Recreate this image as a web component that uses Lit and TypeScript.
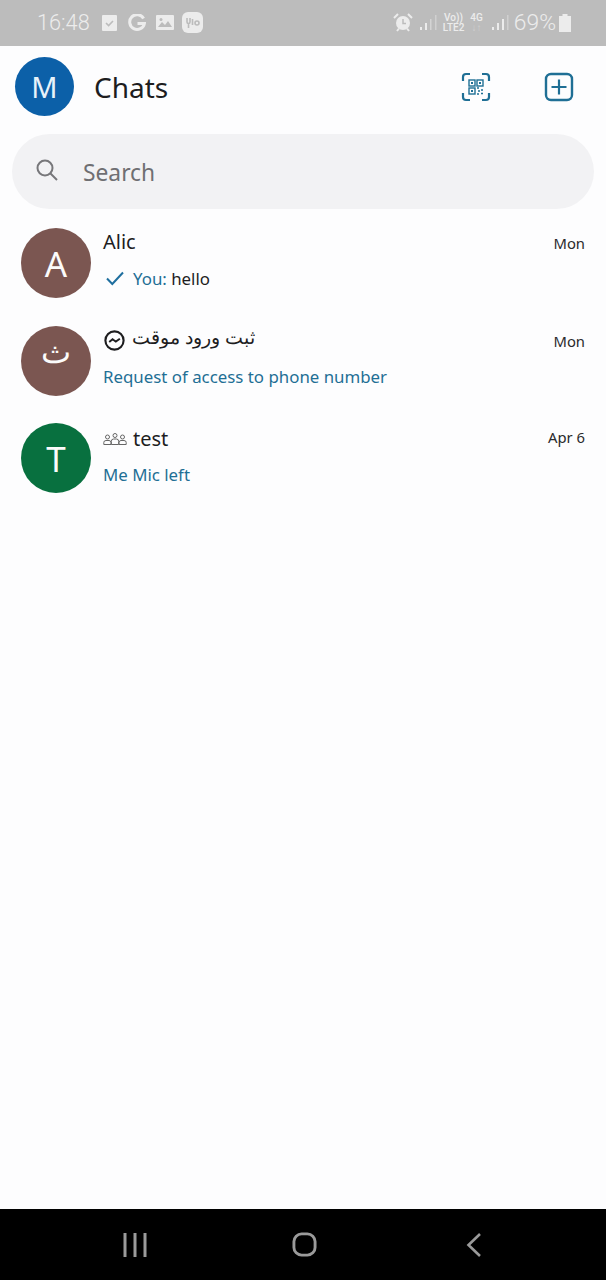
import { LitElement, html, css, svg } from "lit";
import { customElement } from "lit/decorators.js";

const check = svg`<svg class="check" width="22" height="18" viewBox="0 0 22 18"><path d="M3 9.5 8.300 15 19 3.500" fill="none" stroke="#1f6f9f" stroke-width="2"/></svg>`;
const messenger = svg`<svg class="ti" width="23" height="23" viewBox="0 0 24 24"><circle cx="12" cy="12" r="9.500" fill="none" stroke="#1d1d1f" stroke-width="2.200"/><path d="M6.500 13.600 10 10.600l3.400 2.600 4.200-3" fill="none" stroke="#1d1d1f" stroke-width="2"/></svg>`;
const group = svg`<svg class="ti" width="24" height="14" viewBox="0 0 24 14" fill="none" stroke="#666" stroke-width="1"><circle cx="4.500" cy="5" r="2"/><circle cx="12" cy="3.500" r="2"/><circle cx="19.500" cy="5" r="2"/><path d="M.8 12.500V10.500Q.8 8.500 3 8.500H6Q8 8.500 8 10.500V12.500ZM8.300 12.500V9.500Q8.300 7 10.500 7H13.500Q15.700 7 15.700 9.500V12.500ZM16 12.500V10.500Q16 8.500 18 8.500H21Q23.200 8.500 23.200 10.500V12.500Z"/></svg>`;

@customElement("app-root")
export class AppRoot extends LitElement {
  static styles = css`
    :host { display: flex; flex-direction: column; width: 606px; height: 1280px; background: #fdfdfe; font-family: "Noto Sans", "Noto Sans CJK SC", sans-serif; color: #1d1d1f; overflow: hidden; }
    .status { height: 45px; background: #bcbcbc; display: flex; align-items: center; justify-content: space-between; padding: 0 35px 1px 37px; color: #ececec; flex: none; }
    .sl, .sr { display: flex; align-items: center; }
    .time { font-size: 21.700px; margin-right: 12px; font-family: "Roboto", sans-serif; font-weight: 300; }
    .sl svg { margin-right: 10px; }
    .sl svg:first-of-type { margin-right: 11px; }
    .sl svg:nth-of-type(3) { margin-right: 8px; }
    .pct { font-size: 22.800px; font-family: "Roboto", sans-serif; font-weight: 300; margin: 0 3px 0 3px; }
    .net { font-family: "Roboto", sans-serif; font-size: 10px; line-height: 10px; text-align: center; font-weight: 500; margin: 0 4px; }
    .sig1 { margin-left: 6px; }
    .sig2 { margin-left: 4px; }
    .net2 { margin-left: 2px; }
    .dim { color: #d0d0d0; }
    header { display: flex; align-items: center; height: 84px; padding: 0 32px 3px 15px; flex: none; box-sizing: border-box; }
    .me { width: 59px; height: 59px; background: #0c60a8; color: #e8f2fa; font-size: 29px; margin-right: 20px; }
    .avatar { border-radius: 50%; display: flex; align-items: center; justify-content: center; flex: none; }
    h1 { margin: 0; font-size: 28px; font-weight: 400; flex: 1; line-height: 1; }
    .qr { margin-right: 53px; }
    .search { margin: 4px 12px 0; height: 75px; border-radius: 38px; background: #f2f2f4; display: flex; align-items: center; padding: 0 24px; color: #6f6f72; font-size: 22.800px; flex: none; }
    .search svg { margin-right: 25px; margin-top: -4px; }
    .search span { margin-top: 2px; }
    .list { display: flex; flex-direction: column; padding: 19px 21px 0; gap: 27px; flex: 1; }
    .row { display: flex; height: 70.500px; }
    .row .avatar { width: 70px; height: 70px; color: #fbfbfb; font-size: 35px; margin-right: 12px; }
    .row .arabic { padding-bottom: 20px; box-sizing: border-box; font-size: 32px; }
    .body { flex: 1; display: flex; flex-direction: column; }
    .first .body { margin-top: -1px; }
    .top { display: flex; justify-content: space-between; height: 30px; align-items: center; }
    .name { font-size: 20px; display: flex; align-items: center; gap: 6px; line-height: 30px; }
    .fa { font-size: 19.400px; margin-top: -8px; }
    .third .name { margin-top: 2px; }
    .date { font-size: 14.800px; margin-top: 1px; color: #2a2a2c; }
    .third .date { margin-top: -3px; }
    .sub { font-size: 16.850px; color: #1f6f95; display: flex; align-items: center; height: 30px; margin-top: 6px; }
    .sub .dark { color: #1d1d1f; white-space: pre; }
    .check { margin-right: 7px; margin-left: 1px; }
    .ti { flex: none; }
    nav { height: 71px; background: #000; display: flex; align-items: center; justify-content: center; flex: none; }
    nav svg { flex: none; }
    .home { margin-right: 5px; }
    .nav-row { display: flex; width: 359px; justify-content: space-between; align-items: center; margin-right: 1px; }
  `;

  render() {
    return html`
      <div class="status">
        <div class="sl">
          <span class="time">16:48</span>
          <svg width="15" height="16" viewBox="0 0 15 16"><path d="M1 0h13a1 1 0 0 1 1 1v14a1 1 0 0 1-1 1H1a1 1 0 0 1-1-1V1a1 1 0 0 1 1-1Z" fill="#ececec"/><path d="M4 8l2.600 2.600L11 6" fill="none" stroke="#bcbcbc" stroke-width="1.600"/></svg>
          <svg width="18" height="18" viewBox="0 0 18 18"><path d="M15.600 4.500A7.400 7.400 0 1 0 16.400 9.400H9.500" fill="none" stroke="#ececec" stroke-width="3"/></svg>
          <svg width="18" height="15" viewBox="0 0 18 15"><rect width="18" height="15" rx="1" fill="#ececec"/><path d="M2 12l4-5 3 3 3-4 4 6Z" fill="#bcbcbc"/><circle cx="5" cy="4.500" r="1.500" fill="#bcbcbc"/></svg>
          <svg width="21" height="21" viewBox="0 0 21 21"><rect width="21" height="21" rx="6" fill="#ececec"/><path d="M5 6v4q0 1.500 1.500 1.500T8 10V6M6.500 11v5M10.500 7v6" fill="none" stroke="#bcbcbc" stroke-width="1.600"/><circle cx="15" cy="11" r="2" fill="none" stroke="#bcbcbc" stroke-width="1.600"/></svg>
        </div>
        <div class="sr">
          <svg width="20" height="20" viewBox="0 0 20 20"><path d="M1 5 5 1M19 5l-4-4M4 18l2-2.500M16 18l-2-2.500" stroke="#ececec" stroke-width="2"/><circle cx="10" cy="10" r="7" fill="#ececec"/><path d="M10 6v4.500h3" fill="none" stroke="#bcbcbc" stroke-width="1.500"/></svg>
          <svg class="sig1" width="20" height="16" viewBox="0 0 20 16"><rect x="1" y="12" width="2" height="3" fill="#ececec"/><rect x="6" y="8" width="2" height="7" fill="#ececec"/><rect x="11" y="4" width="1.500" height="11" fill="#d4d4d4"/><rect x="16" y="0" width="1.500" height="15" fill="#d0d0d0"/></svg>
          <span class="net">Vo))<br>LTE2</span>
          <span class="net net2">4G<br><span class="dim">↓↑</span></span>
          <svg class="sig2" width="20" height="16" viewBox="0 0 20 16"><rect x="1" y="12" width="2" height="3" fill="#ececec"/><rect x="6" y="8" width="2" height="7" fill="#ececec"/><rect x="11" y="4" width="2" height="11" fill="#ececec"/><rect x="16" y="0" width="1.500" height="15" fill="#d0d0d0"/></svg>
          <span class="pct">69%</span>
          <svg width="12" height="18" viewBox="0 0 12 18"><path d="M3.500 0h5v2H12v16H0V2h3.500Z" fill="#ececec"/></svg>
        </div>
      </div>
      <header>
        <div class="avatar me">M</div>
        <h1>Chats</h1>
        <svg class="qr" width="30" height="30" viewBox="0 0 30 30" fill="none" stroke="#1f6f95">
          <path stroke-width="2.200" d="M9 2H5Q2 2 2 5v4M21 2h4q3 0 3 3v4M9 28H5q-3 0-3-3v-4M21 28h4q3 0 3-3v-4"/>
          <rect x="8" y="8" width="6" height="6" stroke-width="1.400"/><rect x="16" y="8" width="6" height="6" stroke-width="1.400"/><rect x="8" y="16" width="6" height="6" stroke-width="1.400"/>
          <path stroke-width="1.600" d="M16 16h2M20 18h2M17 19h2M16 22h2M20 21.500h2"/>
          <path stroke-width="2" d="M10 11h2M18 11h2M10 19h2"/>
        </svg>
        <svg width="30" height="30" viewBox="0 0 30 30" fill="none" stroke="#1f6f95"><rect x="2" y="2" width="26" height="26" rx="5" stroke-width="2.400"/><path d="M15 7.500v15M7.500 15h15" stroke-width="2.200"/></svg>
      </header>
      <div class="search">
        <svg width="22" height="22" viewBox="0 0 22 22" fill="none" stroke="#77777a" stroke-width="2"><circle cx="9" cy="9" r="7.500"/><path d="M14.500 14.500 21 21"/></svg>
        <span>Search</span>
      </div>
      <div class="list">
        <div class="row first">
          <div class="avatar" style="background:#7b5651">A</div>
          <div class="body">
            <div class="top"><span class="name">Alic</span><span class="date">Mon</span></div>
            <div class="sub">${check}<span>You:&nbsp;</span><span class="dark">hello</span></div>
          </div>
        </div>
        <div class="row">
          <div class="avatar arabic" style="background:#7b5651">ث</div>
          <div class="body">
            <div class="top"><span class="name">${messenger}<span class="fa">ثبت ورود موقت</span></span><span class="date">Mon</span></div>
            <div class="sub">Request of access to phone number</div>
          </div>
        </div>
        <div class="row third">
          <div class="avatar" style="background:#08703f">T</div>
          <div class="body">
            <div class="top"><span class="name">${group}<span>test</span></span><span class="date">Apr 6</span></div>
            <div class="sub">Me Mic left</div>
          </div>
        </div>
      </div>
      <nav>
        <div class="nav-row">
          <svg width="24" height="24" viewBox="0 0 24 24" fill="none" stroke="#9a9a9a" stroke-width="3"><path d="M2 0v24M12 0v24M22 0v24"/></svg>
          <svg class="home" width="25" height="25" viewBox="0 0 26 26" fill="none" stroke="#9a9a9a" stroke-width="3"><rect x="2" y="2" width="22" height="22" rx="8"/></svg>
          <svg width="16" height="24" viewBox="0 0 16 24" fill="none" stroke="#9a9a9a" stroke-width="2.600"><path d="M14 1 2.500 12 14 23"/></svg>
        </div>
      </nav>
    `;
  }
}
